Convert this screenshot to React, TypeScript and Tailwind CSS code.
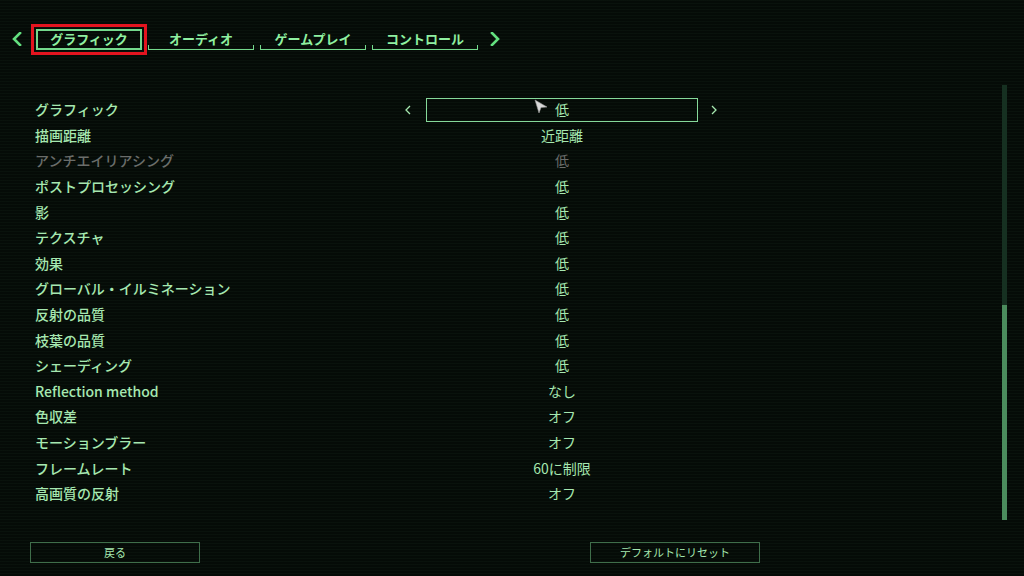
import React from "react";

type Row = {
  label: string;
  value: string;
  disabled?: boolean;
};

const rows: Row[] = [
  { label: "グラフィック", value: "低" },
  { label: "描画距離", value: "近距離" },
  { label: "アンチエイリアシング", value: "低", disabled: true },
  { label: "ポストプロセッシング", value: "低" },
  { label: "影", value: "低" },
  { label: "テクスチャ", value: "低" },
  { label: "効果", value: "低" },
  { label: "グローバル・イルミネーション", value: "低" },
  { label: "反射の品質", value: "低" },
  { label: "枝葉の品質", value: "低" },
  { label: "シェーディング", value: "低" },
  { label: "Reflection method", value: "なし" },
  { label: "色収差", value: "オフ" },
  { label: "モーションブラー", value: "オフ" },
  { label: "フレームレート", value: "60に制限" },
  { label: "高画質の反射", value: "オフ" },
];

const tabs = ["グラフィック", "オーディオ", "ゲームプレイ", "コントロール"];

function Chevron({ dir, className }: { dir: "left" | "right"; className?: string }) {
  return (
    <svg width="10" height="14" viewBox="0 0 10 14" className={className}>
      <path
        d={dir === "left" ? "M8 1 L2 7 L8 13" : "M2 1 L8 7 L2 13"}
        fill="none"
        stroke="currentColor"
        strokeWidth="2.6"
        strokeLinecap="square"
      />
    </svg>
  );
}

function SmallChevron({ dir }: { dir: "left" | "right" }) {
  return (
    <svg width="8" height="12" viewBox="0 0 8 12" className="text-[#a6e8b0]">
      <path
        d={dir === "left" ? "M6 2 L2 6 L6 10" : "M2 2 L6 6 L2 10"}
        fill="none"
        stroke="currentColor"
        strokeWidth="1.3"
      />
    </svg>
  );
}

function Cursor() {
  return (
    <svg width="14" height="15" viewBox="0 0 14 15" className="absolute left-[534px] top-[99px]">
      <path d="M1 1 L13 8 L7 8.5 L5 14 Z" fill="#d8d8d8" stroke="#9a9a9a" strokeWidth="0.6" />
    </svg>
  );
}

function BracketTab({ label }: { label: string }) {
  return (
    <div className="w-[106px] h-[21px] relative flex items-center justify-center text-[13px] font-bold text-[#8ff0a0]">
      {label}
      <div className="absolute left-0 right-0 bottom-0 h-[5px] border-x-[1.5px] border-b-[1.5px] border-[#74d98c]" />
    </div>
  );
}

function Tabs() {
  return (
    <div className="flex items-center h-[78px] pl-[12px]">
      <Chevron dir="left" className="text-[#63e07f] mr-[14px]" />
      <div className="flex gap-[6px]">
        <div className="w-[106px] h-[21px] flex items-center justify-center border-2 border-[#74d98c] outline-[3px] outline-[#e3141f] outline-offset-[2px] text-[13px] font-bold text-[#8ff0a0]">
          {tabs[0]}
        </div>
        {tabs.slice(1).map((t) => (
          <BracketTab key={t} label={t} />
        ))}
      </div>
      <Chevron dir="right" className="text-[#63e07f] ml-[12px]" />
    </div>
  );
}

function SettingRow({ row, selected }: { row: Row; selected: boolean }) {
  const color = row.disabled ? "text-[#6a6d6a]" : "text-[#a6e8b0]";
  return (
    <div className={`flex items-center h-[25.6px] text-[14px] ${color}`}>
      <div className="w-[365px] font-medium">{row.label}</div>
      <div className="w-[16px] flex justify-center">{selected && <SmallChevron dir="left" />}</div>
      <div
        className={`ml-[10px] w-[272px] h-[24px] flex items-center justify-center ${
          selected ? "border-[1.5px] border-[#86d99a]" : ""
        }`}
      >
        {row.value}
      </div>
      <div className="ml-[8px] w-[16px] flex justify-center">{selected && <SmallChevron dir="right" />}</div>
    </div>
  );
}

export default function App() {
  return (
    <div className="relative w-[1024px] h-[576px] overflow-hidden bg-[#050b07] font-['Noto_Sans_CJK_JP','Noto_Sans',sans-serif]">
      <div className="absolute inset-0 pointer-events-none bg-[repeating-linear-gradient(to_bottom,rgba(120,200,140,0.035)_0px,rgba(120,200,140,0.035)_1px,transparent_1px,transparent_3px)]" />
      <div className="relative flex flex-col h-full">
        <Tabs />
        <div className="flex flex-1">
          <div className="flex flex-col pl-[35px] pt-[19px] flex-1">
            {rows.map((r, i) => (
              <SettingRow key={r.label} row={r} selected={i === 0} />
            ))}
          </div>
          <div className="w-[5px] mr-[17px] mt-[7px] mb-[8px] flex flex-col bg-[#163021]">
            <div className="flex-[220]" />
            <div className="flex-[215] bg-[#4b8c5d]" />
          </div>
        </div>
        <div className="flex items-start h-[48px] pl-[30px] pt-[14px]">
          <button className="w-[170px] h-[21px] border-[1.5px] border-[#3f6e4a] text-[11px] text-[#a6e8b0]">
            戻る
          </button>
          <button className="ml-[390px] w-[170px] h-[21px] border-[1.5px] border-[#3f6e4a] text-[11px] text-[#a6e8b0]">
            デフォルトにリセット
          </button>
        </div>
      </div>
      <Cursor />
    </div>
  );
}
